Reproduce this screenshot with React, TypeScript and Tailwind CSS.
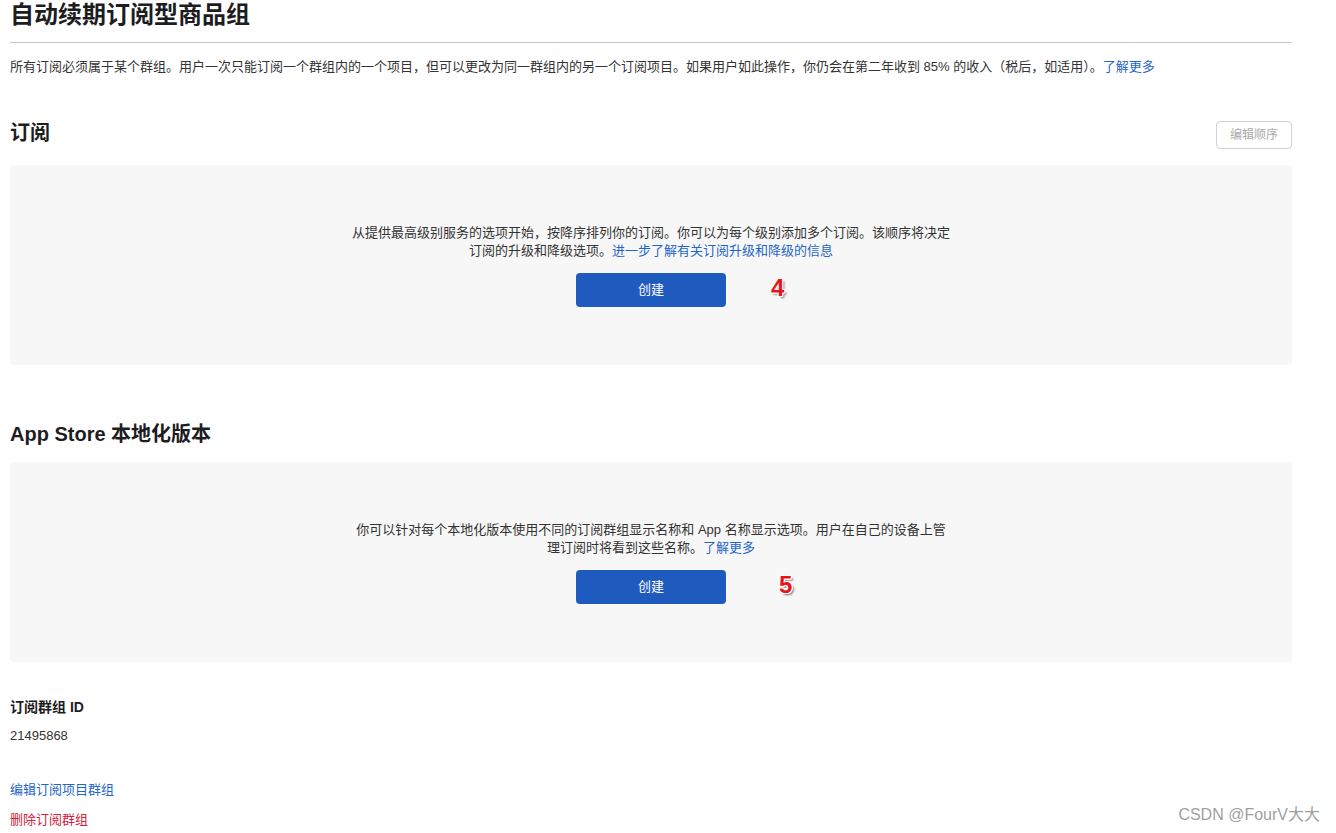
import React from "react";

const font = { fontFamily: '"Liberation Sans", "Noto Sans CJK SC", sans-serif' };

function Badge({ n }: { n: string }): JSX.Element {
    return (
        <span
            className="absolute text-[24px] font-bold text-[#e8141b] leading-none"
            style={{
                textShadow:
                    "1px 0 0 #fff, -1px 0 0 #fff, 0 1px 0 #fff, 0 -1px 0 #fff, 1px 1px 0 #fff, -1px -1px 0 #fff, 1px -1px 0 #fff, -1px 1px 0 #fff, 2px 2px 2px rgba(0,0,0,0.55)",
            }}
        >
            {n}
        </span>
    );
}

function Panel({ lines, badge, badgeX }: { lines: React.ReactNode; badge: string; badgeX: string }): JSX.Element {
    return (
        <div className="bg-[#f7f7f7] rounded-[4px] h-[200px] flex flex-col items-center justify-center">
            <p className="text-[13px] leading-[18px] text-[#333] text-center">{lines}</p>
            <div className="relative mt-[13px]">
                <button className="w-[150px] h-[34px] bg-[#1f5bbf] rounded-[4px] text-white text-[13px]">创建</button>
                <div className={badgeX}>
                    <Badge n={badge} />
                </div>
            </div>
        </div>
    );
}

export default function App(): JSX.Element {
    return (
        <div className="bg-white w-[1336px] h-[833px] relative overflow-hidden text-[#1d1d1f]" style={font}>
            <div className="px-[10px] w-[1302px]">
                <h1 className="text-[24px] font-bold leading-[30px]">自动续期订阅型商品组</h1>
                <div className="h-px bg-[#c8c8c8] mt-[12px]" />
                <p className="text-[13px] leading-[18px] mt-[15px] text-[#333]">
                    所有订阅必须属于某个群组。用户一次只能订阅一个群组内的一个项目，但可以更改为同一群组内的另一个订阅项目。如果用户如此操作，你仍会在第二年收到 85% 的收入（税后，如适用）。
                    <span className="text-[#1e66c8]">了解更多</span>
                </p>

                <div className="flex items-start justify-between mt-[45px]">
                    <h2 className="text-[20px] font-bold leading-[24px]">订阅</h2>
                    <button className="w-[76px] h-[28px] border border-[#d2d2d2] rounded-[4px] text-[12px] text-[#aaa]">编辑顺序</button>
                </div>
                <div className="mt-[16px]">
                    <Panel
                        badge="4"
                        badgeX="absolute left-[195px] top-[3px]"
                        lines={
                            <>
                                从提供最高级别服务的选项开始，按降序排列你的订阅。你可以为每个级别添加多个订阅。该顺序将决定
                                <br />
                                订阅的升级和降级选项。<span className="text-[#1e66c8]">进一步了解有关订阅升级和降级的信息</span>
                            </>
                        }
                    />
                </div>

                <h2 className="text-[20px] font-bold leading-[24px] mt-[57px]">App Store 本地化版本</h2>
                <div className="mt-[16px]">
                    <Panel
                        badge="5"
                        badgeX="absolute left-[203px] top-[3px]"
                        lines={
                            <>
                                你可以针对每个本地化版本使用不同的订阅群组显示名称和 App 名称显示选项。用户在自己的设备上管
                                <br />
                                理订阅时将看到这些名称。<span className="text-[#1e66c8]">了解更多</span>
                            </>
                        }
                    />
                </div>

                <div className="mt-[36px] text-[14px] font-bold leading-[18px]">订阅群组 ID</div>
                <div className="mt-[11px] text-[13px] leading-[18px] text-[#333]">21495868</div>
                <div className="mt-[36px] text-[13px] leading-[18px] text-[#1e66c8]">编辑订阅项目群组</div>
                <div className="mt-[12px] text-[13px] leading-[18px] text-[#d6213a]">删除订阅群组</div>
            </div>
            <div className="absolute right-[16px] bottom-[6px] text-[16px] text-[#a0a0a0]">CSDN @FourV大大</div>
        </div>
    );
}
